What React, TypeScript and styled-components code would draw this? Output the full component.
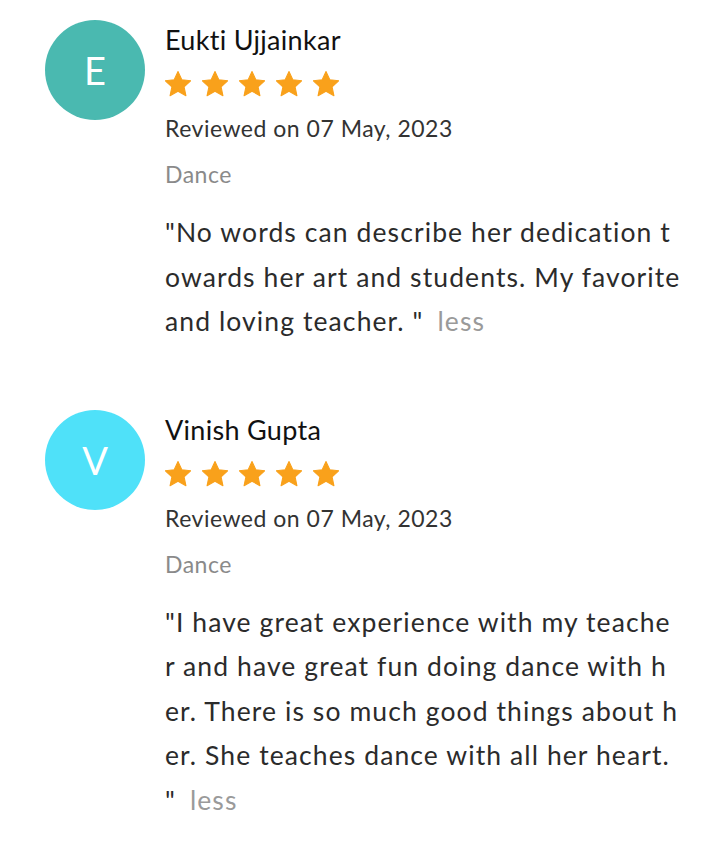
import styled, { createGlobalStyle } from "styled-components";

const GlobalStyle = createGlobalStyle`
  body {
    margin: 0;
    background: #ffffff;
    font-family: Lato, "Noto Sans", sans-serif;
    font-variant-ligatures: none;
  }
`;

type ReviewData = {
  initial: string;
  name: string;
  color: string;
  date: string;
  category: string;
  text: string;
};

const reviews: ReviewData[] = [
  {
    initial: "E",
    name: "Eukti Ujjainkar",
    color: "#4ab9b0",
    date: "07 May, 2023",
    category: "Dance",
    text: "\"No words can describe her dedication towards her art and students. My favorite and loving teacher. \"",
  },
  {
    initial: "V",
    name: "Vinish Gupta",
    color: "#4fe1f9",
    date: "07 May, 2023",
    category: "Dance",
    text: "\"I have great experience with my teacher and have great fun doing dance with her. There is so much good things about her. She teaches dance with all her heart. \"",
  },
];

function Star() {
  return (
    <svg width="26" height="26" viewBox="2 2 20 20">
      <path
        d="M12 2.4l2.95 6.3 6.85.75-5.1 4.7 1.4 6.85L12 17.6 5.9 21l1.4-6.85-5.1-4.7 6.85-.75z"
        fill="#f9a11b"
        stroke="#f9a11b"
        strokeWidth="0.8"
        strokeLinejoin="round"
      />
    </svg>
  );
}

function App() {
  return (
    <Page>
      <GlobalStyle />
      {reviews.map((r) => (
        <Review key={r.name}>
          <Avatar $bg={r.color}>{r.initial}</Avatar>
          <Body>
            <Name>{r.name}</Name>
            <Stars>
              {[0, 1, 2, 3, 4].map((i) => (
                <Star key={i} />
              ))}
            </Stars>
            <Meta>Reviewed on {r.date}</Meta>
            <Category>{r.category}</Category>
            <Quote>
              {r.text}
              <Less>less</Less>
            </Quote>
          </Body>
        </Review>
      ))}
    </Page>
  );
}
export default App;

const Page = styled.div`
  display: flex;
  flex-direction: column;
  gap: 66px;
  padding: 20px 0 0 45px;
  width: 720px;
  box-sizing: border-box;
`;

const Review = styled.div`
  display: flex;
  gap: 20px;
  align-items: flex-start;
`;

const Avatar = styled.div<{ $bg: string }>`
  flex: none;
  width: 100px;
  height: 100px;
  border-radius: 50%;
  background: ${(p) => p.$bg};
  color: #ffffff;
  font-size: 38px;
  display: flex;
  align-items: center;
  justify-content: center;
`;

const Body = styled.div`
  display: flex;
  flex-direction: column;
  width: 515.5px;
  color: #222;
`;

const Name = styled.div`
  font-size: 27px;
  line-height: 40px;
  letter-spacing: 0.3px;
  color: #111;
`;

const Stars = styled.div`
  display: flex;
  gap: 11px;
  margin: 11px 0 0 0;
  height: 28px;
`;

const Meta = styled.div`
  font-size: 23px;
  line-height: 36px;
  letter-spacing: 0.5px;
  margin-top: 11px;
  color: #333;
`;

const Category = styled.div`
  font-size: 23px;
  line-height: 36px;
  letter-spacing: 0.5px;
  margin-top: 10px;
  color: #8a8a8a;
`;

const Quote = styled.p`
  margin: 18px 0 0;
  font-size: 26.5px;
  line-height: 44.5px;
  letter-spacing: 1.1px;
  color: #2b2b2b;
  word-break: break-all;
`;

const Less = styled.span`
  margin-left: 14px;
  color: #9a9a9a;
`;
